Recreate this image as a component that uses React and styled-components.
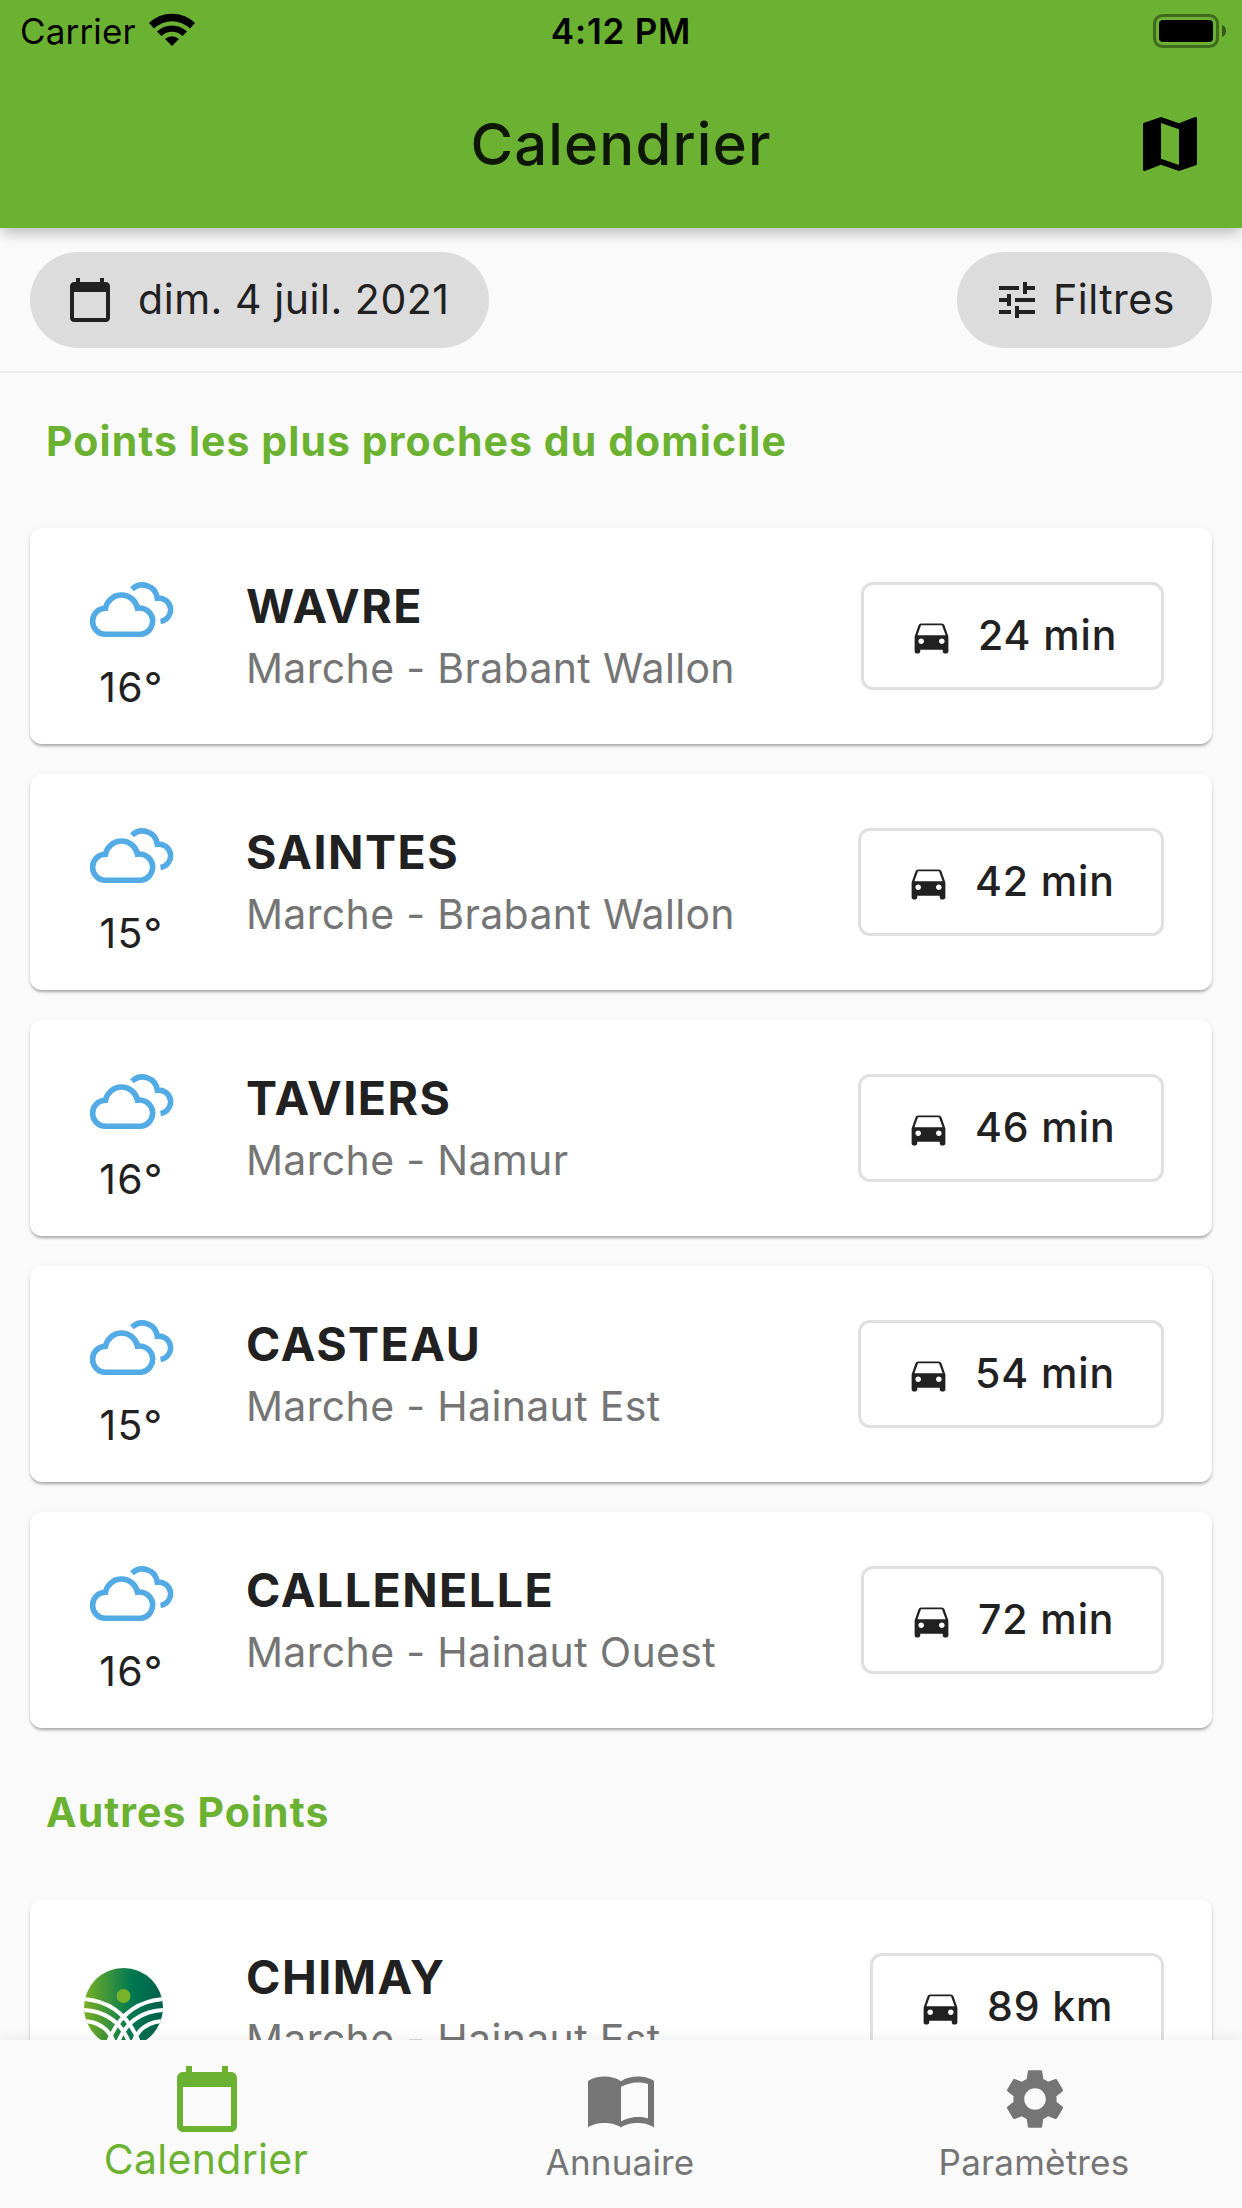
import React from "react";
import styled, { createGlobalStyle } from "styled-components";

const GREEN = "#6cb232";

const GlobalStyle = createGlobalStyle`
  * { box-sizing: border-box; }
  body {
    margin: 0;
    background: #fafafa;
    font-family: Inter, "Liberation Sans", sans-serif;
    color: #212121;
  }
`;

const Screen = styled.div`
  display: flex;
  flex-direction: column;
  width: 1242px;
  height: 2208px;
  overflow: hidden;
  background: #fafafa;
`;

const Text = styled.span`
  display: block;
  white-space: nowrap;
  font-size: ${(p) => p.$size}px;
  line-height: ${(p) => p.$line}px;
  font-weight: ${(p) => p.$weight || 400};
  letter-spacing: ${(p) => p.$track || 0}px;
  color: ${(p) => p.$color || "#212121"};
`;

const Header = styled.header`
  z-index: 1;
  flex: none;
  height: 228px;
  background: ${GREEN};
  box-shadow: 0 6px 12px -3px rgba(0, 0, 0, 0.18), 0 10px 13px 0 rgba(0, 0, 0, 0.06), 0 3px 18px 0 rgba(0, 0, 0, 0.05);
`;

const StatusBar = styled.div`
  display: grid;
  grid-template-columns: 1fr auto 1fr;
  align-items: center;
  height: 60px;
  padding: 2px 16px 0;
`;

const Carrier = styled.div`
  display: flex;
  align-items: center;
  gap: 13px;
  padding-left: 4px;
`;

const BatteryIcon = styled.svg`
  display: block;
  justify-self: end;
  width: 73px;
  height: 34px;
`;

const WifiIcon = styled.svg`
  display: block;
  width: 46px;
  height: 33px;
  margin-top: -4px;
`;

const TitleBar = styled.div`
  display: grid;
  grid-template-columns: 72px 1fr 72px;
  align-items: center;
  justify-items: center;
  height: 168px;
  padding: 0 36px;
`;

const Title = styled.h1`
  margin: 0 0 1px;
`;

const Toolbar = styled.div`
  display: flex;
  flex: none;
  justify-content: space-between;
  height: 145px;
  padding: 24px 30px 0;
  border-bottom: 2px solid #ebebeb;
`;

const Chip = styled.button`
  display: flex;
  align-items: center;
  gap: ${(p) => p.$gap}px;
  width: ${(p) => p.$width}px;
  height: 96px;
  padding: 0 0 0 36px;
  border: 0;
  border-radius: 48px;
  background: #dcdcdc;
  font-family: inherit;
`;

const ButtonLabel = styled(Text)`
  padding-bottom: 2px;
`;

const Icon = styled.svg`
  display: block;
  flex: none;
  width: ${(p) => p.$size}px;
  height: ${(p) => p.$size}px;
  fill: ${(p) => p.$color || "#212121"};
`;

const Content = styled.main`
  flex: 1;
  min-height: 0;
  overflow: hidden;
`;

const SectionTitle = styled.h2`
  display: flex;
  margin: 0;
  height: 155px;
  padding: 40px 0 0 46px;
`;

const CardList = styled.div`
  display: flex;
  flex-direction: column;
  gap: 30px;
  padding: 0 30px 16px;
`;

const Card = styled.article`
  display: flex;
  align-items: flex-start;
  height: 216px;
  padding-right: 48px;
  border-radius: 12px;
  background: #fff;
  box-shadow: 0 3px 3px -1px rgba(0, 0, 0, 0.2), 0 2px 3px 0 rgba(0, 0, 0, 0.12), 0 1px 6px 0 rgba(0, 0, 0, 0.06);
`;

const Weather = styled.div`
  display: flex;
  flex-direction: column;
  align-items: center;
  width: 204px;
  padding-top: 54px;
`;

const CloudIcon = styled.svg`
  display: block;
  width: 84px;
  height: 55px;
  margin-bottom: 25px;
`;

const Temperature = styled(Text)`
  padding-right: 1px;
`;

const LogoIcon = styled.svg`
  display: block;
  width: 79px;
  height: 79px;
  margin: 15px 18px 0 0;
`;

const Place = styled.div`
  flex: 1;
  padding: 49px 0 0 12px;
`;

const Travel = styled.button`
  display: flex;
  align-items: center;
  gap: 24px;
  width: ${(p) => p.$width}px;
  height: 108px;
  margin-top: 54px;
  padding: 0 0 0 45px;
  border: 3px solid #e0e0e0;
  border-radius: 12px;
  background: #fff;
  font-family: inherit;
`;

const NavBar = styled.nav`
  z-index: 1;
  display: grid;
  flex: none;
  grid-template-columns: repeat(3, 1fr);
  height: 168px;
  background: #fafafa;
  box-shadow: 0 -3px 12px rgba(0, 0, 0, 0.06);
`;

const NavItem = styled.div`
  display: flex;
  flex-direction: column;
  align-items: center;
  padding-top: 23px;
`;

const NavLabel = styled(Text)`
  padding-right: 2px;
`;

const CALENDAR =
  "M20 3h-1V1h-2v2H7V1H5v2H4c-1.1 0-2 .9-2 2v16c0 1.1.9 2 2 2h16c1.1 0 2-.9 2-2V5c0-1.1-.9-2-2-2zm0 18H4V8h16v13z";
const MAP =
  "M20.5 3l-.16.03L15 5.1 9 3 3.36 4.9c-.21.07-.36.25-.36.48V20.5c0 .28.22.5.5.5l.16-.03L9 18.9l6 2.1 5.64-1.9c.21-.07.36-.25.36-.48V3.5c0-.28-.22-.5-.5-.5zM15 19l-6-2.11V5l6 2.11V19z";
const TUNE =
  "M3 17v2h6v-2H3zM3 5v2h10V5H3zm10 16v-2h8v-2h-8v-2h-2v6h2zM7 9v2H3v2h4v2h2V9H7zm14 4v-2H11v2h10zm-6-4h2V7h4V5h-4V3h-2v6z";
const CAR =
  "M18.92 6.01C18.72 5.42 18.16 5 17.5 5h-11c-.66 0-1.21.42-1.42 1.01L3 12v8c0 .55.45 1 1 1h1c.55 0 1-.45 1-1v-1h12v1c0 .55.45 1 1 1h1c.55 0 1-.45 1-1v-8l-2.08-5.99zM6.5 16c-.83 0-1.5-.67-1.5-1.5S5.67 13 6.5 13s1.5.67 1.5 1.5S7.33 16 6.5 16zm11 0c-.83 0-1.5-.67-1.5-1.5s.67-1.5 1.5-1.5 1.5.67 1.5 1.5-.67 1.5-1.5 1.5zM4.500 11.300l1.900-5.300h11.200L19.500 11.300H4.500z";
const BOOK =
  "M12 6.05C10.5 5 8.5 4.5 6.5 4.5S2.45 4.9 1 6v15.5C2.45 20.4 4.55 20 6.5 20s4.05.4 5.5 1.5c1.45-1.1 3.55-1.5 5.5-1.5s4.05.4 5.5 1.5V6c-1.45-1.1-3.55-1.5-5.5-1.5S13.5 5 12 6.05zM21 18.5c-1.1-.35-2.3-.5-3.5-.5-1.7 0-4.15.65-5.5 1.5V8c1.35-.85 3.8-1.5 5.5-1.5 1.2 0 2.4.15 3.5.5v11.5z";
const GEAR =
  "M19.14 12.94c.04-.3.06-.61.06-.94 0-.32-.02-.64-.07-.94l2.03-1.58c.18-.14.23-.41.12-.61l-1.92-3.32c-.12-.22-.37-.29-.59-.22l-2.39.96c-.5-.38-1.03-.7-1.62-.94l-.36-2.54c-.04-.24-.24-.41-.48-.41h-3.84c-.24 0-.43.17-.47.41l-.36 2.54c-.59.24-1.13.57-1.62.94l-2.39-.96c-.22-.08-.47 0-.59.22L2.74 8.87c-.12.21-.08.47.12.61l2.03 1.58c-.05.3-.09.63-.09.94s.02.64.07.94l-2.03 1.58c-.18.14-.23.41-.12.61l1.92 3.32c.12.22.37.29.59.22l2.39-.96c.5.38 1.03.7 1.62.94l.36 2.54c.05.24.24.41.48.41h3.84c.24 0 .44-.17.47-.41l.36-2.54c.59-.24 1.13-.56 1.62-.94l2.39.96c.22.08.47 0 .59-.22l1.92-3.32c.12-.22.07-.47-.12-.61l-2.01-1.58zM12 15.6c-1.98 0-3.6-1.62-3.6-3.6s1.62-3.6 3.6-3.6 3.6 1.62 3.6 3.6-1.62 3.6-3.6 3.6z";

const Glyph = ({ path, size, color }) => (
  <Icon viewBox="0 0 24 24" $size={size} $color={color}>
    <path fillRule="evenodd" d={path} />
  </Icon>
);

const Wifi = () => (
  <WifiIcon viewBox="0 0 46 33">
    <path d="M0 10A33 33 0 0 1 46 10L41 15.500A26 26 0 0 0 5 15.500Z" />
    <path d="M8 18.500A21.500 21.500 0 0 1 38 18.500L33.500 23A15 15 0 0 0 12.500 23Z" />
    <path d="M16 26A10 10 0 0 1 30 26L23 33Z" />
  </WifiIcon>
);

const Battery = () => (
  <BatteryIcon viewBox="0 0 73 34">
    <rect x="1.500" y="1.500" width="63" height="31" rx="8" fill="none" stroke="#000" strokeOpacity="0.4" strokeWidth="3" />
    <rect x="6" y="6" width="54" height="22" rx="4" />
    <path d="M69 11a6.500 6.500 0 0 1 0 12z" opacity="0.5" />
  </BatteryIcon>
);

const Clouds = () => (
  <CloudIcon viewBox="0 0 84 55" fill="none" stroke="#53abe6" strokeWidth="5.600">
    <path d="M15.500 52.200A12.700 12.700 0 0 1 15.500 26.300A16.300 16.300 0 0 1 47.500 26.200A13 13 0 0 1 51.500 52.200Z" />
    <path d="M41 7.200A15 15 0 0 1 66.300 16.200A11.700 11.700 0 0 1 69.500 39.400" transform="translate(1 0)" />
  </CloudIcon>
);

const Logo = () => (
  <LogoIcon viewBox="0 0 79 79">
    <defs>
      <linearGradient id="leaf">
        <stop offset="0" stopColor="#78b024" />
        <stop offset="0.600" stopColor="#007850" />
        <stop offset="1" stopColor="#005f4c" />
      </linearGradient>
      <clipPath id="disc">
        <circle cx="39.500" cy="39.500" r="39.500" />
      </clipPath>
    </defs>
    <circle cx="39.500" cy="39.500" r="39.500" fill="url(#leaf)" />
    <circle cx="39.500" cy="28" r="7" fill="#76b22a" />
    <g clipPath="url(#disc)" fill="none" stroke="#fff" strokeWidth="4">
      <path d="M-1 31Q42 34 57 80" />
      <path d="M-1 42Q36 44 47 80" />
      <path d="M-1 53Q25 54 32 80" />
      <path d="M80 31Q37 34 22 80" />
      <path d="M80 42Q43 44 32 80" />
      <path d="M80 53Q54 54 47 80" />
    </g>
  </LogoIcon>
);

const nearest = [
  { name: "WAVRE", region: "Marche - Brabant Wallon", temp: "16°", travel: "24 min", width: 303 },
  { name: "SAINTES", region: "Marche - Brabant Wallon", temp: "15°", travel: "42 min", width: 306 },
  { name: "TAVIERS", region: "Marche - Namur", temp: "16°", travel: "46 min", width: 306 },
  { name: "CASTEAU", region: "Marche - Hainaut Est", temp: "15°", travel: "54 min", width: 306 },
  { name: "CALLENELLE", region: "Marche - Hainaut Ouest", temp: "16°", travel: "72 min", width: 303 },
];
const others = [{ name: "CHIMAY", region: "Marche - Hainaut Est", travel: "89 km", width: 294 }];

const PointCard = ({ point }) => (
  <Card>
    <Weather>
      {point.temp ? (
        <>
          <Clouds />
          <Temperature $size={41} $line={50} $track={1.2}>{point.temp}</Temperature>
        </>
      ) : (
        <Logo />
      )}
    </Weather>
    <Place>
      <Text $size={46.500} $line={58} $weight={700} $track={1.5}>{point.name}</Text>
      <Text $size={41} $line={66} $track={0.33} $color="#757575">{point.region}</Text>
    </Place>
    <Travel $width={point.width}>
      <Glyph path={CAR} size={45} />
      <ButtonLabel $size={41} $line={50} $weight={500} $track={0.9}>{point.travel}</ButtonLabel>
    </Travel>
  </Card>
);

const Section = ({ title, points }) => (
  <section>
    <SectionTitle>
      <Text $size={41} $line={56} $weight={700} $track={1.07} $color={GREEN}>{title}</Text>
    </SectionTitle>
    <CardList>
      {points.map((p) => (
        <PointCard key={p.name} point={p} />
      ))}
    </CardList>
  </section>
);

export default function App() {
  return (
    <Screen>
      <GlobalStyle />
      <Header>
        <StatusBar>
          <Carrier>
            <Text $size={35} $line={44} $track={0.15} $color="#000">Carrier</Text>
            <Wifi />
          </Carrier>
          <Text $size={35} $line={44} $weight={600} $track={0.8} $color="#000">4:12 PM</Text>
          <Battery />
        </StatusBar>
        <TitleBar>
          <span />
          <Title>
            <Text $size={58} $line={72} $weight={450} $track={1.2} $color="#0e1706">Calendrier</Text>
          </Title>
          <Glyph path={MAP} size={72} color="#000" />
        </TitleBar>
      </Header>
      <Toolbar>
        <Chip $gap={24} $width={459}>
          <Glyph path={CALENDAR} size={48} />
          <ButtonLabel $size={41} $line={50} $track={0.55}>dim. 4 juil. 2021</ButtonLabel>
        </Chip>
        <Chip $gap={12} $width={255}>
          <Glyph path={TUNE} size={48} />
          <ButtonLabel $size={41} $line={50} $track={0.5}>Filtres</ButtonLabel>
        </Chip>
      </Toolbar>
      <Content>
        <Section title="Points les plus proches du domicile" points={nearest} />
        <Section title="Autres Points" points={others} />
      </Content>
      <NavBar>
        <NavItem>
          <Glyph path={CALENDAR} size={72} color={GREEN} />
          <NavLabel $size={41} $line={48} $track={0.3} $color={GREEN}>Calendrier</NavLabel>
        </NavItem>
        <NavItem>
          <Glyph path={BOOK} size={72} color="#757575" />
          <NavLabel $size={35} $line={54} $track={0.2} $color="#757575">Annuaire</NavLabel>
        </NavItem>
        <NavItem>
          <Glyph path={GEAR} size={72} color="#757575" />
          <NavLabel $size={35} $line={54} $track={0.2} $color="#757575">Paramètres</NavLabel>
        </NavItem>
      </NavBar>
    </Screen>
  );
}
